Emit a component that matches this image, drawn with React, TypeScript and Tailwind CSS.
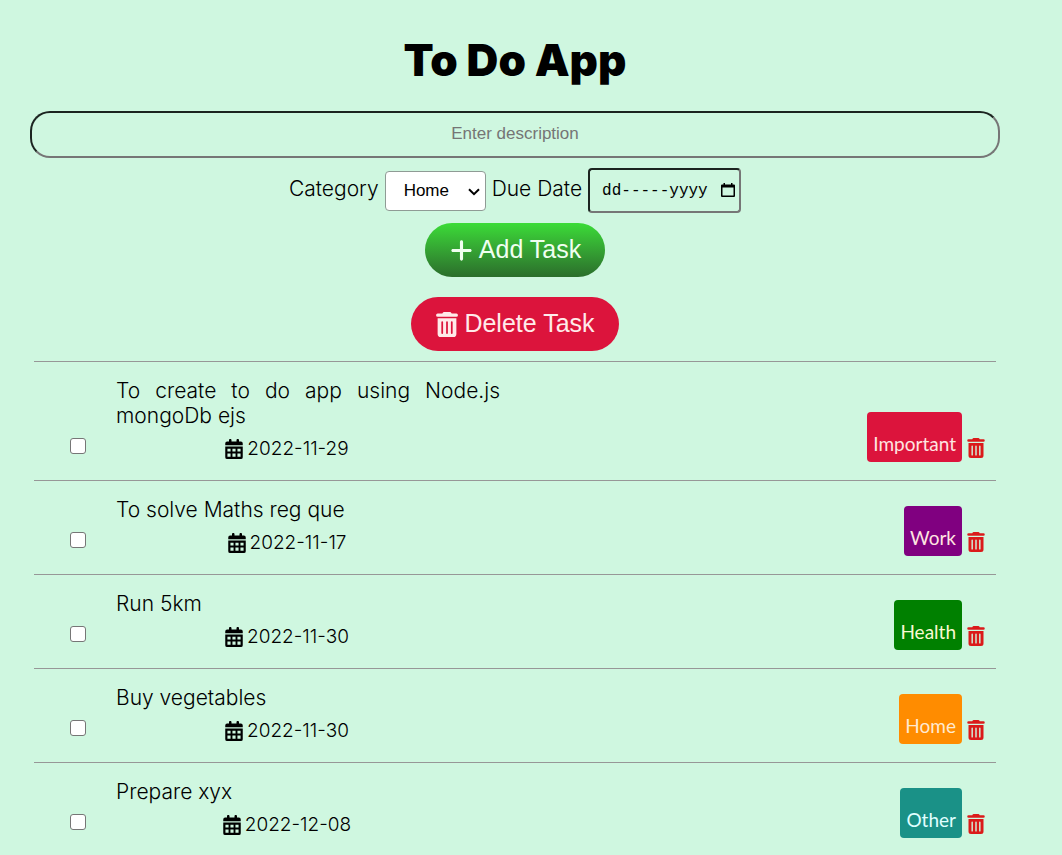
import { FaPlus } from "react-icons/fa6";

type Task = { text: string; due: string; category: string; tag: string };

const tasks: Task[] = [
  { text: "To create to do app using Node.js mongoDb ejs", due: "2022-11-29", category: "Important", tag: "bg-[#dc143c] text-[#ffe4e1]" },
  { text: "To solve Maths reg que", due: "2022-11-17", category: "Work", tag: "bg-[#800080] text-[#ffe4e1]" },
  { text: "Run 5km", due: "2022-11-30", category: "Health", tag: "bg-[#008000] text-[#fafad2]" },
  { text: "Buy vegetables", due: "2022-11-30", category: "Home", tag: "bg-[#ff8c00] text-[#ffe9d0]" },
  { text: "Prepare xyx", due: "2022-12-08", category: "Other", tag: "bg-[#1a9187] text-[#e0ffff]" },
];

function CalendarIcon() {
  return (
    <svg viewBox="0 0 448 512" className="h-5 w-[18px]" fill="currentColor" aria-hidden="true">
      <path d="M96 32c0-43 64-43 64 0v32h128V32c0-43 64-43 64 0v32h48q48 0 48 48v48H0v-48q0-48 48-48h48z" />
      <path
        fillRule="evenodd"
        d="M0 192h448v272q0 48-48 48H48q-48 0-48-48zM56 248v72h80v-72zM184 248v72h80v-72zM312 248v72h80v-72zM56 368v88h80v-88zM184 368v88h80v-88zM312 368v88h80v-88z"
      />
    </svg>
  );
}

function TrashIcon({ className }: { className: string }) {
  return (
    <svg viewBox="0 0 448 512" className={className} fill="currentColor" aria-hidden="true">
      <path d="M135 18Q144 0 164 0h120q20 0 29 18l7 14h96q32 0 32 32t-32 32H32Q0 96 0 64t32-32h96z" />
      <path
        fillRule="evenodd"
        d="M32 128h384v320q0 64-64 64H96q-64 0-64-64zM108 208v224q0 18 18 18t18-18V208q0-18-18-18t-18 18zM206 208v224q0 18 18 18t18-18V208q0-18-18-18t-18 18zM304 208v224q0 18 18 18t18-18V208q0-18-18-18t-18 18z"
      />
    </svg>
  );
}

function TaskRow({ task }: { task: Task }) {
  return (
    <li className="flex items-end border-t border-[#979797] pt-4 pr-2.5 pb-[18px] pl-9">
      <input
        type="checkbox"
        aria-label={task.text}
        className="mb-2 size-4 shrink-0 appearance-none rounded-[3px] border border-[#767676] bg-white checked:bg-[#0075ff]"
      />
      <div className="ml-[30px] w-96">
        <p className="text-justify leading-[25px]">{task.text}</p>
        <p className="mt-2 flex w-[342px] items-center justify-center gap-1 text-[19px] leading-[26px]">
          <CalendarIcon />
          <time>{task.due}</time>
        </p>
      </div>
      <div className="ml-auto flex items-end gap-1">
        <span className={`flex h-[50px] items-end rounded px-1.5 pb-1 font-[Lato,sans-serif] text-[19px] leading-7 font-normal ${task.tag}`}>
          {task.category}
        </span>
        <button type="button" aria-label={`Delete ${task.text}`} className="mb-1 px-px text-[#db1a1a]">
          <TrashIcon className="h-5 w-[18px]" />
        </button>
      </div>
    </li>
  );
}

export default function App() {
  return (
    <div className="min-h-screen bg-[#cff7e0] pt-9 pr-[62px] pl-[30px] font-[Inter,sans-serif] text-[21px] font-light text-black">
      <h1 className="text-center text-[44px] leading-[49px] font-black">To Do App</h1>
      <form onSubmit={(e) => e.preventDefault()} className="mt-[26px] flex flex-col items-center">
        <input
          type="text"
          aria-label="Description"
          placeholder="Enter description"
          className="h-[47px] w-full rounded-[20px] border-2 border-t-[#1c2420] border-r-[#767676] border-b-[#767676] border-l-[#1c2420] bg-transparent pb-0.5 text-center font-['Liberation_Sans',sans-serif] text-[17px] font-normal placeholder:text-[#757575]"
        />
        <div className="mt-2.5 flex items-center gap-1.5">
          <label htmlFor="category" className="pb-1">Category</label>
          <div className="relative">
            <select
              id="category"
              defaultValue="Home"
              className="block h-10 w-[101px] appearance-none rounded border border-[#8f9b95] bg-white pl-[18px] font-['Liberation_Sans',sans-serif] text-[17px] font-normal"
            >
              {["Home", "Work", "Health", "Important", "Other"].map((c) => (
                <option key={c}>{c}</option>
              ))}
            </select>
            <svg viewBox="0 0 12 8" className="pointer-events-none absolute top-[17px] right-1.5 h-2 w-3" fill="none" stroke="black" strokeWidth="2">
              <path d="M1 1.2 6 6.2 11 1.2" />
            </svg>
          </div>
          <label htmlFor="due" className="pb-1">Due Date</label>
          <div className="relative">
            <input
              id="due"
              type="text"
              placeholder="dd-----yyyy"
              className="block h-[45px] w-[153px] rounded border-2 border-t-[#1c2420] border-r-[#767676] border-b-[#767676] border-l-[#1c2420] bg-transparent pr-7 pl-3 font-['Liberation_Mono',monospace] text-base font-normal placeholder:text-black"
            />
            <svg viewBox="0 0 14 14" className="pointer-events-none absolute top-[15px] right-1.5 size-3.5" fill="black">
              <path fillRule="evenodd" d="M2.5 0H4v1.5h6V0h1.5v1.5H13q1 0 1 1V13q0 1-1 1H1q-1 0-1-1V2.500q0-1 1-1h1.500zM1.500 4.500v8h11v-8z" />
            </svg>
          </div>
        </div>
        <button
          type="submit"
          className="mt-2.5 flex h-[54px] items-center gap-[5px] rounded-full bg-linear-to-b from-[#3bdc37] to-[#2b6e2b] px-6 font-['Liberation_Sans',sans-serif] text-[25px] font-normal text-[#f0fff0]"
        >
          <FaPlus /> Add Task
        </button>
        <button
          type="button"
          className="mt-5 flex h-[54px] items-center gap-[5px] rounded-full bg-[#dc143c] px-6 font-['Liberation_Sans',sans-serif] text-[25px] font-normal text-[#ffeaea]"
        >
          <TrashIcon className="h-[25px] w-6" /> Delete Task
        </button>
      </form>
      <ul className="mx-1 mt-2.5">
        {tasks.map((t) => (
          <TaskRow key={t.text} task={t} />
        ))}
      </ul>
    </div>
  );
}
